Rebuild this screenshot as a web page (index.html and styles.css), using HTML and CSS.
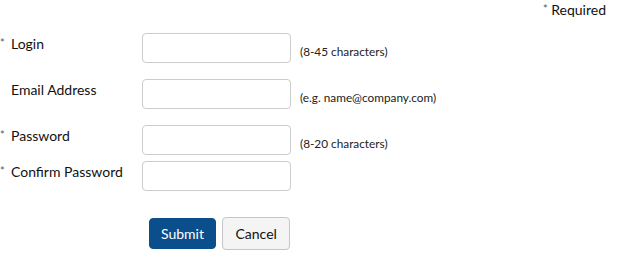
FILE: index.html
```html
<!DOCTYPE html>
<html lang="en">
  <head>
    <meta charset="UTF-8" />
    <meta name="viewport" content="width=device-width, initial-scale=1.0" />
    <title>Create Account</title>
    <link rel="stylesheet" href="styles.css">
  </head>
  <body>
    <form class="signup" onsubmit="return false">
      <p class="required-note"><span class="star">*</span> Required</p>

      <div class="row spaced">
        <label for="login"><span class="star">*</span>Login</label>
        <input type="text" id="login" />
        <span class="hint">(8-45 characters)</span>
      </div>

      <div class="row spaced">
        <label for="email"><span class="star"></span>Email Address</label>
        <input type="text" id="email" />
        <span class="hint">(e.g. name@company.com)</span>
      </div>

      <div class="row">
        <label for="password"><span class="star">*</span>Password</label>
        <input type="password" id="password" />
        <span class="hint">(8-20 characters)</span>
      </div>

      <div class="row">
        <label for="confirm"><span class="star">*</span>Confirm Password</label>
        <input type="password" id="confirm" />
      </div>

      <div class="actions">
        <button type="submit" class="btn btn-primary">Submit</button>
        <button type="button" class="btn btn-default">Cancel</button>
      </div>
    </form>
  </body>
</html>
```

FILE: styles.css
```css
body {
  margin: 0;
  font-family: Lato, "Open Sans", sans-serif;
  color: #111;
  background: #fff;
}

.signup {
  width: 620px;
}

.required-note {
  margin: 1px 0 0;
  padding-right: 14px;
  text-align: right;
  font-size: 14px;
  line-height: 17px;
}

.star {
  display: inline-block;
  width: 11px;
  font-size: 11px;
  line-height: 10px;
  vertical-align: top;
  color: #4a5a70;
}

.required-note .star {
  width: auto;
  margin-top: 3px;
}

.row {
  display: flex;
  align-items: flex-start;
  margin-bottom: 6px;
}

.row:first-of-type {
  margin-top: 15px;
}

.row.spaced {
  margin-bottom: 16px;
}

.row label {
  width: 142px;
  padding-top: 1px;
  font-size: 14px;
  line-height: 20px;
}

.row label .star {
  margin-top: 4px;
}

.row input {
  box-sizing: border-box;
  width: 149px;
  height: 30px;
  margin: 0;
  padding: 4px 8px;
  border: 1px solid #cccccc;
  border-radius: 4px;
  font-family: inherit;
  font-size: 14px;
}

.hint {
  margin-left: 9px;
  padding-top: 11px;
  font-size: 11.8px;
  line-height: 15px;
  color: #222;
}

.actions {
  display: flex;
  align-items: center;
  gap: 6px;
  margin-top: 26px;
  margin-left: 149px;
}

.btn {
  box-sizing: border-box;
  margin: 0;
  padding: 0 11px;
  border-radius: 4px;
  font-family: inherit;
  font-size: 14px;
}

.btn-primary {
  height: 31px;
  border: 1px solid #0a4f8c;
  background: #0a4f8c;
  color: #fff;
}

.btn-default {
  height: 33px;
  padding: 0 12.5px;
  border: 1px solid #c6c6c6;
  background: #f4f4f4;
  color: #111;
}
```
